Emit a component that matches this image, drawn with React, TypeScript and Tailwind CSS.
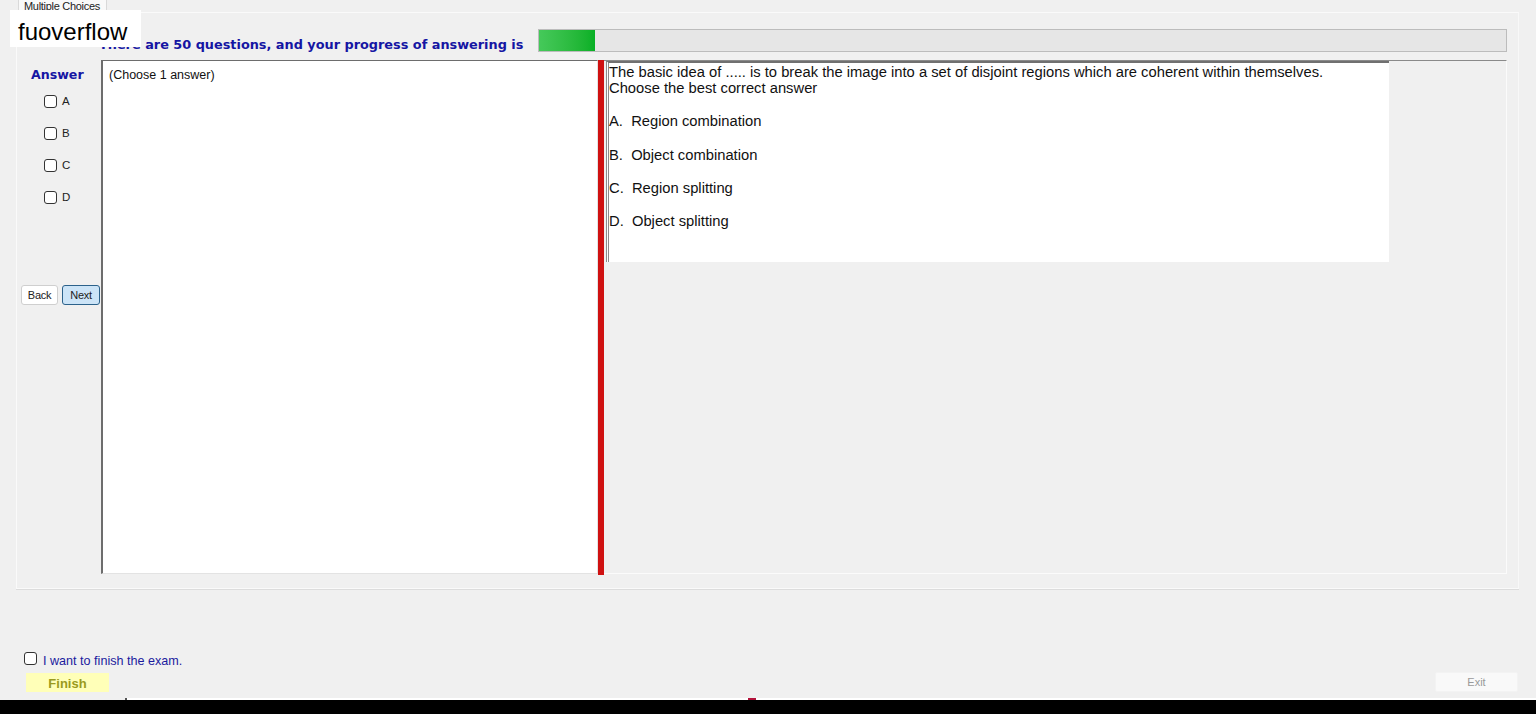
import React from "react";

const options = [
  "A.  Region combination",
  "B.  Object combination",
  "C.  Region splitting",
  "D.  Object splitting",
];

function Box({ className = "" }: { className?: string }) {
  return (
    <span
      className={
        "inline-block w-[13px] h-[13px] rounded-[3px] border border-[#333333] bg-white " +
        className
      }
    />
  );
}

const wide = { fontFamily: '"DejaVu Sans", Verdana, sans-serif' };

export default function App() {
  return (
    <div
      className="relative w-[1536px] h-[714px] overflow-hidden bg-[#f0f0f0] flex flex-col"
      style={{ fontFamily: '"Liberation Sans", Arial, sans-serif' }}
    >
      {/* tab strip */}
      <div className="h-[12px] flex">
        <div className="ml-[18px] w-[89px] h-[13px] bg-[#f9f9f9] border border-t-0 border-[#d9d9d9] text-[11px] leading-[12px] text-[#222] pl-[5px] overflow-hidden tracking-[-0.3px]">
          Multiple Choices
        </div>
      </div>

      {/* tab page */}
      <div className="ml-[16px] w-[1503px] h-[577px] border border-[#fafafa] border-r-[#f8f8f8] shadow-[0_1px_0_#dcdcdc] flex flex-col">
        {/* header */}
        <div className="mt-[16px] h-[23px] flex items-center">
          <div
            className="w-[521px] pl-[82px] pt-[8px] text-[12.85px] font-bold text-[#1515a3] whitespace-nowrap"
            style={wide}
          >
            There are 50 questions, and your progress of answering is
          </div>
          <div className="w-[969px] h-[23px] bg-[#e6e6e6] border border-[#bcbcbc] flex">
            <div className="w-[56px] h-full bg-gradient-to-r from-[#45c95a] to-[#06b025]" />
          </div>
        </div>

        {/* body */}
        <div className="mt-[8px] flex h-[515px]">
          {/* answer column */}
          <div className="w-[84px] flex flex-col">
            <div
              className="pl-[14px] pt-[7px] text-[12.6px] font-bold text-[#1515a3] leading-[16px]"
              style={wide}
            >
              Answer
            </div>
            <div className="pl-[27px] pt-[12px] flex flex-col gap-[19px]">
              {["A", "B", "C", "D"].map((l) => (
                <div key={l} className="flex items-center h-[13px]">
                  <Box />
                  <span className="ml-[5px] text-[11.5px] text-[#222]">{l}</span>
                </div>
              ))}
            </div>
            <div className="pl-[4px] mt-[81px] flex gap-[4px]">
              <button className="w-[37px] h-[20px] bg-white border border-[#cfcfcf] rounded-[3px] text-[11px] text-[#222] tracking-[-0.3px]">
                Back
              </button>
              <button className="w-[38px] h-[20px] bg-[#cce4f7] border border-[#2c628b] rounded-[3px] text-[11px] text-[#222] tracking-[-0.3px]">
                Next
              </button>
            </div>
          </div>

          {/* note box */}
          <div className="w-[497px] h-[514px] bg-white border-l-2 border-t border-[#6d6d6d] border-r border-b border-r-[#e3e3e3] border-b-[#e3e3e3] pl-[6px] pt-[5px] text-[12.5px] text-[#111]">
            (Choose 1 answer)
          </div>

          {/* splitter */}
          <div className="w-[6px] h-[515px] bg-[#cf1111]" />

          {/* question panel */}
          <div className="w-[903px] h-[514px] border-t border-[#8a8a8a] border-r border-r-[#fbfbfb] border-b border-b-[#fbfbfb] pl-[2px]">
            <div className="w-[783px] h-[201px] bg-white border-l-[3px] border-double border-l-[#8c8c8c] border-t-2 border-t-[#707070] pt-[1px] text-[14.75px] leading-[16.8px] text-[#111]">
              <div>
                The basic idea of ..... is to break the image into a set of disjoint regions which are coherent within themselves.
              </div>
              <div className="-mt-[1px]">Choose the best correct answer</div>
              {options.map((o) => (
                <React.Fragment key={o}>
                  <div className="h-[16.6px]" />
                  <div className="whitespace-pre">{o}</div>
                </React.Fragment>
              ))}
            </div>
          </div>
        </div>
      </div>

      {/* finish area */}
      <div className="mt-[62px] ml-[24px] flex items-center h-[14px]">
        <Box />
        <span className="ml-[6px] mt-[6px] text-[12.6px] text-[#1b1b9e]">I want to finish the exam.</span>
      </div>
      <div className="mt-[7px] flex items-start h-[20px]">
        <button className="ml-[26px] mt-[1px] pt-[1px] w-[83px] h-[19px] bg-[#ffffb8] text-[13px] font-bold text-[#9a9a1e]">
          Finish
        </button>
        <div className="flex-1" />
        <button className="mr-[18px] w-[83px] h-[20px] bg-[#f9f9f9] border border-[#f3f3f3] rounded-[2px] text-[11px] text-[#9a9a9a]">
          Exit
        </button>
      </div>

      {/* bottom edge */}
      <div className="mt-[6px] h-[2px] flex">
        <div className="ml-[125px] w-[2px] bg-[#555]" />
        <div className="w-[621px] bg-white" />
        <div className="w-[8px] bg-[#b3123a]" />
        <div className="flex-1 bg-white" />
      </div>
      <div className="flex-1 bg-black" />

      {/* watermark */}
      <div className="absolute left-[10px] top-[10px] w-[131px] h-[37px] bg-white text-[24px] text-black pl-[8px] pt-[3px] leading-[37px]">
        fuoverflow
      </div>
    </div>
  );
}
